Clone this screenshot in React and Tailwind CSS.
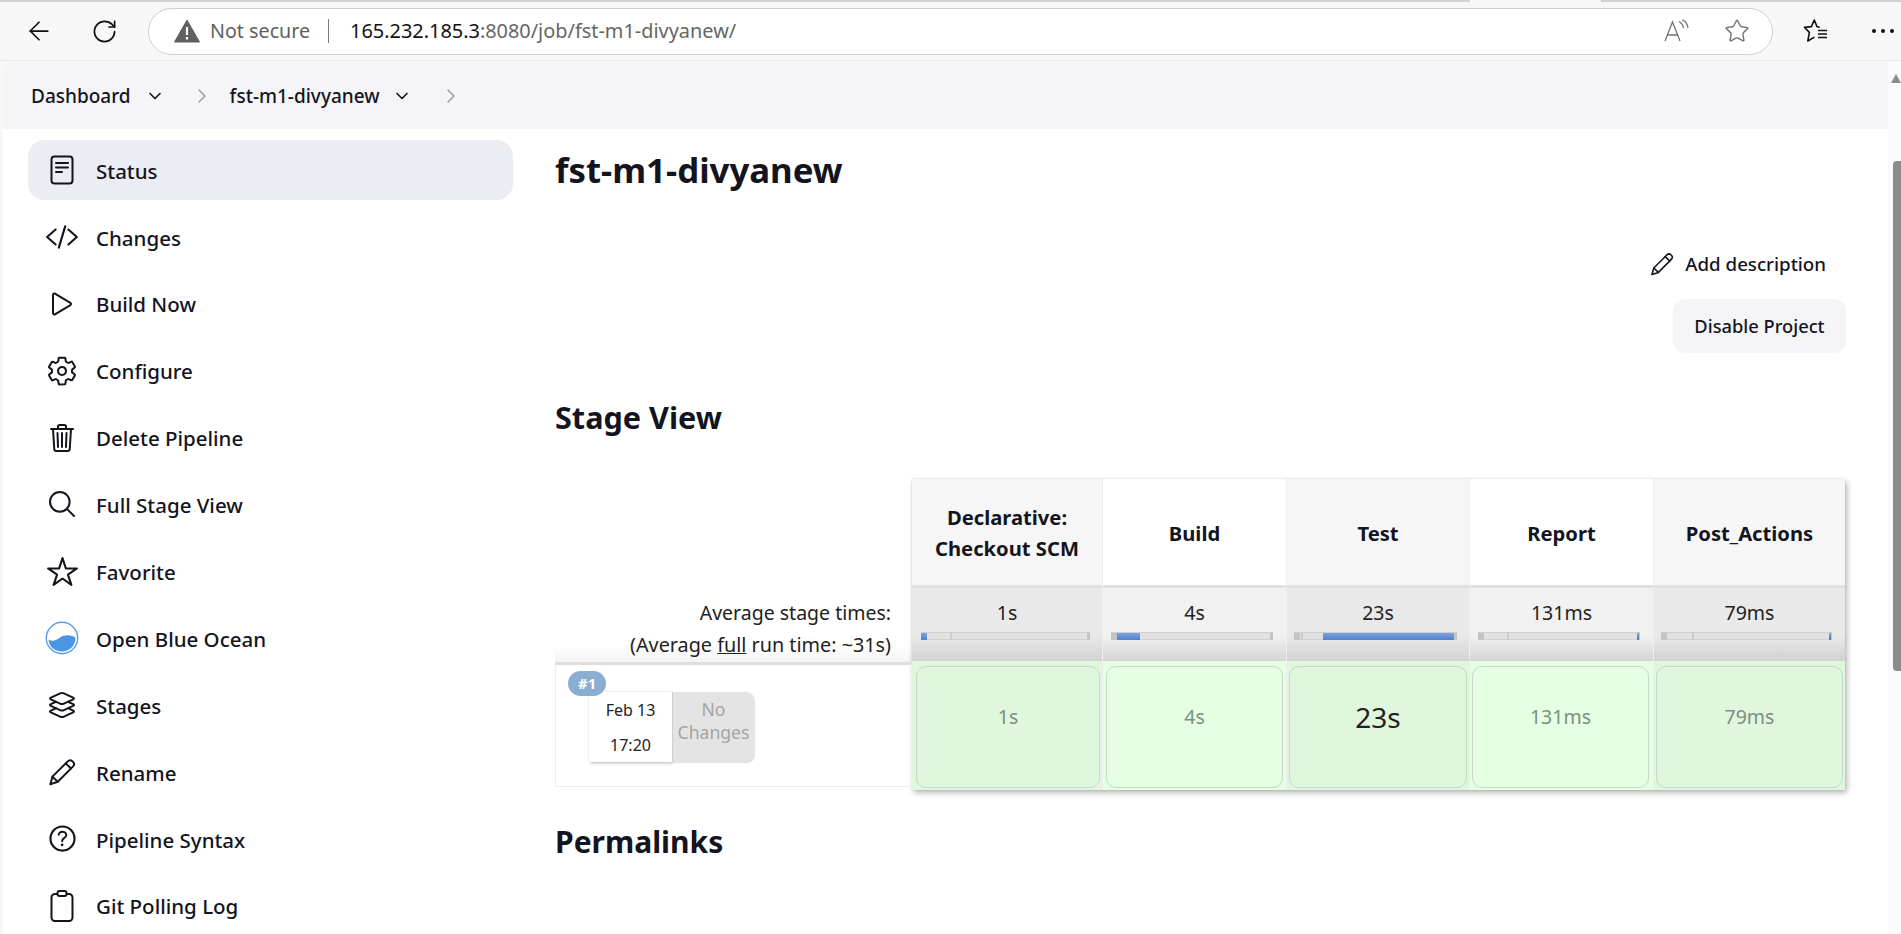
import { ArrowLeft, RotateCw, Star, ChevronDown, ChevronRight } from 'lucide-react';
import {
  IoCodeSlashOutline,
  IoPlayOutline,
  IoSettingsOutline,
  IoTrashOutline,
  IoSearchOutline,
  IoStarOutline,
  IoLayersOutline,
  IoHelpCircleOutline,
} from 'react-icons/io5';

const FONT = 'font-["Noto_Sans",sans-serif]';

function StatusIcon() {
  return (
    <svg width="30" height="30" viewBox="0 0 30 30" fill="none" stroke="currentColor" strokeWidth="2" strokeLinecap="round">
      <rect x="4.5" y="1.5" width="21" height="27" rx="3" />
      <path d="M9 8H21M9 12.5H21M9 17H15" />
    </svg>
  );
}

function OceanIcon() {
  return (
    <svg width="34" height="34" viewBox="0 0 34 34" fill="none">
      <circle cx="17" cy="17" r="15.7" stroke="#5b9de8" strokeWidth="1.4" />
      <path d="M3.5 18.5C8 21 11.5 19 15 16.5C19 13.5 25 13.5 30.5 16.5C30.5 25 24 30.5 17 30.5C9.5 30.5 4 25.5 3.5 18.5Z" fill="#4c94e4" />
    </svg>
  );
}

function ClipboardIcon() {
  return (
    <svg width="30" height="32" viewBox="0 0 30 32" fill="none" stroke="currentColor" strokeWidth="2" strokeLinejoin="round">
      <rect x="4.5" y="4" width="21" height="27" rx="3.5" />
      <rect x="10.5" y="1" width="9" height="5" rx="2" fill="white" />
    </svg>
  );
}

function PencilIcon({ size, strokeWidth = 1.7 }) {
  return (
    <svg width={size} height={size} viewBox="0 0 24 24" fill="none" stroke="currentColor" strokeWidth={strokeWidth} strokeLinejoin="round" strokeLinecap="round">
      <path d="M2 22.5L3.8 16L16.8 3C18 1.8 19.6 1.6 20.8 2.7L21.6 3.5C22.7 4.7 22.5 6.2 21.3 7.4L8.4 20.4Z" />
      <path d="M15.2 4.6L19.7 9M3.8 16L8.4 20.4" />
    </svg>
  );
}

const NAV_ITEMS = [
  { label: 'Status', icon: <StatusIcon />, active: true },
  { label: 'Changes', icon: <IoCodeSlashOutline size={34} /> },
  { label: 'Build Now', icon: <IoPlayOutline size={32} /> },
  { label: 'Configure', icon: <IoSettingsOutline size={32} /> },
  { label: 'Delete Pipeline', icon: <IoTrashOutline size={32} /> },
  { label: 'Full Stage View', icon: <IoSearchOutline size={32} /> },
  { label: 'Favorite', icon: <IoStarOutline size={33} /> },
  { label: 'Open Blue Ocean', icon: <OceanIcon /> },
  { label: 'Stages', icon: <IoLayersOutline size={32} /> },
  { label: 'Rename', icon: <PencilIcon size={28} /> },
  { label: 'Pipeline Syntax', icon: <IoHelpCircleOutline size={35} /> },
  { label: 'Git Polling Log', icon: <ClipboardIcon /> },
];

// trackLeft/track size the progress track in its column, fillLeft/fill the blue part, tick the darker mark
const STAGES = [
  { name: ['Declarative:', 'Checkout SCM'], avg: '1s', width: 'w-[191px]', cellPad: 'pl-[4px] pr-[2px]', trackLeft: 9, track: 169, fillLeft: 0, fill: 6, tick: 29 },
  { name: ['Build'], avg: '4s', width: 'w-[184px]', cellPad: 'pl-[3px] pr-[3px]', trackLeft: 8, track: 162, fillLeft: 6, fill: 23, tick: 6 },
  { name: ['Test'], avg: '23s', big: true, width: 'w-[183px]', cellPad: 'pl-[2px] pr-[2px]', trackLeft: 7, track: 163, fillLeft: 29, fill: 131, tick: 7 },
  { name: ['Report'], avg: '131ms', width: 'w-[184px]', cellPad: 'pl-[2px] pr-[4px]', trackLeft: 8, track: 162, fillLeft: 159, fill: 2, tick: 29 },
  { name: ['Post_Actions'], avg: '79ms', width: 'w-[191px]', cellPad: 'pl-[2px] pr-[2px]', trackLeft: 7, track: 171, fillLeft: 168, fill: 2, tick: 31 },
];

function ReadAloudIcon() {
  return (
    <svg width="26" height="24" viewBox="0 0 26 24" fill="none" stroke="#707070" strokeWidth="1.3">
      <path d="M1 22L8.5 3L16 22M3.6 16H13.4" />
      <path d="M15 2.5C17.5 4 19 6 19.5 9M18.5 0.8C22 2.6 23.6 5.4 24 9" />
    </svg>
  );
}

function FavoritesIcon() {
  return (
    <svg width="26" height="26" viewBox="0 0 26 26" fill="none" stroke="#111" strokeWidth="1.6" strokeLinejoin="round" strokeLinecap="round">
      <path d="M16 9.2L14 8.6L11.3 2L8.4 8.6L1.5 9.4L6.4 14.4L4.8 23L11 19.4" />
      <path d="M15 12.5H24M15 16H24M15 19.5H24" strokeWidth="1.4" strokeLinecap="butt" />
    </svg>
  );
}

function Toolbar() {
  return (
    <div className="relative flex h-[61px] shrink-0 items-center border-t-2 border-b border-t-[#d2d2d2] border-b-[#e9e9e9] bg-[#f7f7f7]">
      <div className="absolute left-[1470px] top-[-2px] h-[2px] w-[131px] bg-[#f7f7f7]" />
      <ArrowLeft size={30} strokeWidth={1.4} className="ml-[24px] text-[#111]" />
      <RotateCw size={27} strokeWidth={1.5} className="ml-[37px] text-[#111]" />
      <div className="ml-[30px] flex h-[47px] w-[1625px] items-center rounded-full border border-[#cfcfcf] bg-white">
        <svg className="ml-[25px]" width="26" height="24" viewBox="0 0 26 24">
          <path d="M13 1L25.5 23H0.5Z" fill="#606060" stroke="#606060" strokeLinejoin="round" />
          <path d="M13 8V16M13 18V20.5" stroke="white" strokeWidth="2.2" />
        </svg>
        <span className="ml-[10px] text-[19.7px] text-[#5f5f5f]">Not secure</span>
        <span className="ml-[18px] h-[24px] w-[1px] bg-[#7d7d7d]" />
        <span className="ml-[21px] text-[19.9px] text-[#111]">
          165.232.185.3<span className="text-[#666]">:8080/job/fst-m1-divyanew/</span>
        </span>
        <span className="ml-auto">
          <ReadAloudIcon />
        </span>
        <Star size={26} strokeWidth={1.3} className="ml-[34px] mr-[22px] text-[#707070]" />
      </div>
      <span className="ml-[30px]">
        <FavoritesIcon />
      </span>
      <div className="ml-[43px] flex gap-[5px]">
        <span className="h-[4px] w-[4px] rounded-full bg-[#111]" />
        <span className="h-[4px] w-[4px] rounded-full bg-[#111]" />
        <span className="h-[4px] w-[4px] rounded-full bg-[#111]" />
      </div>
    </div>
  );
}

function Breadcrumbs() {
  return (
    <div className="flex h-[68px] shrink-0 items-center rounded-tl-xl bg-[#f5f5f7] pl-[28px] pt-[2px] text-[19px] font-medium text-[#14141f]">
      <span>Dashboard</span>
      <ChevronDown size={20} strokeWidth={2} className="ml-[14px]" />
      <ChevronRight size={24} strokeWidth={1.5} className="ml-[25px] text-[#9c9ca5]" />
      <span className="ml-[16px]">fst-m1-divyanew</span>
      <ChevronDown size={20} strokeWidth={2} className="ml-[12px]" />
      <ChevronRight size={24} strokeWidth={1.5} className="ml-[27px] text-[#9c9ca5]" />
    </div>
  );
}

function Sidebar() {
  return (
    <nav className="w-[552px] shrink-0 pl-[25px] pr-[42px] pt-[11px]">
      {NAV_ITEMS.map((item) => (
        <div
          key={item.label}
          className={`mb-[6.9px] flex h-[60px] items-center rounded-2xl text-[20.5px] font-medium text-[#14141f] ${item.active ? 'bg-[#ecedf2]' : ''}`}
        >
          <span className="flex w-[68px] justify-center">{item.icon}</span>
          <span className="pt-[2px]">{item.label}</span>
        </div>
      ))}
    </nav>
  );
}

function ProgressBar({ stage }) {
  return (
    <div
      className="relative h-[8px] border-t border-[#cfcfcf] bg-[#e2e2e2] shadow-[inset_0_-1px_1px_rgba(0,0,0,0.08)]"
      style={{ width: stage.track, marginLeft: stage.trackLeft }}
    >
      <div className="absolute inset-y-0 left-0 w-[6px] bg-[#c4c4c4]" />
      <div className="absolute inset-y-0 w-[2px] bg-[#cccccc]" style={{ left: stage.tick }} />
      <div className="absolute inset-y-0 right-0 w-[3px] bg-[#c4c4c4]" />
      <div
        className="absolute inset-y-0 bg-gradient-to-b from-[#7ea3db] to-[#4f7fd0]"
        style={{ left: stage.fillLeft, width: stage.fill }}
      />
    </div>
  );
}

function StageColumn({ stage, index }) {
  const odd = index % 2 === 0;
  const isLast = index === STAGES.length - 1;
  return (
    <div className={`${stage.width} shrink-0 ${isLast ? '' : 'border-r border-[#eeeeee]'}`}>
      <div className={`flex h-[106px] flex-col items-center justify-center pt-[2px] text-[20.2px] font-bold leading-[31px] text-[#14141f] ${odd ? 'bg-[#f6f6f6]' : 'bg-white'}`}>
        {stage.name.map((line) => (
          <span key={line}>{line}</span>
        ))}
      </div>
      <div className={`h-[76px] border-t-[3px] border-[#e0e0e0] ${odd ? 'bg-gradient-to-b from-[#e9e9e9] from-[65%] to-[#d2d2d2]' : 'bg-gradient-to-b from-[#f1f1f1] from-[65%] to-[#d4d4d4]'}`}>
        <div className="pt-[9px] text-center text-[19.5px] leading-[32px] text-[#222]">{stage.avg}</div>
        <div className="pt-[3px]">
          <ProgressBar stage={stage} />
        </div>
      </div>
      <div className={`h-[129px] pb-[2px] pt-[5px] ${stage.cellPad} ${odd ? 'bg-[#dff7dd]' : 'bg-[#e5ffe3]'}`}>
        <div className={`flex h-full items-start justify-center rounded-[10px] border-[1.5px] border-[#c9d6c9] pt-[30px] leading-[40px] ${stage.big ? 'text-[28px] text-[#222]' : 'text-[19.5px] text-[#7f8f7f]'}`}>
          {stage.avg}
        </div>
      </div>
    </div>
  );
}

function StageView() {
  return (
    <div className="mt-[42px] flex">
      <div className="w-[357px] shrink-0 pt-[106px]">
        <div className="h-[77px] bg-gradient-to-b from-white from-[80%] to-[#f3f3f3] pr-[21px] pt-[12px] text-right leading-[32px] text-[#222]">
          <div className="text-[19.5px]">Average stage times:</div>
          <div className="text-[19.8px]">
            (Average <span className="underline">full</span> run time: ~31s)
          </div>
        </div>
        <div className="relative h-[125px] border-x border-b border-t-[3px] border-x-[#eeeeee] border-b-[#eeeeee] border-t-[#dedede]">
          <div className="absolute left-[12px] top-[6px] z-10 rounded-full bg-[#8aaed2] px-[10px] text-[15px] font-bold leading-[25px] text-white">#1</div>
          <div className="ml-[33px] mt-[27px] flex w-[165px]">
            <div className="h-[70px] w-[83px] bg-white pt-[1px] text-center text-[16px] leading-[35px] text-[#222] shadow-[1px_1px_3px_rgba(0,0,0,0.3)]">
              <div>Feb 13</div>
              <div>17:20</div>
            </div>
            <div className="flex h-[70px] w-[82px] items-center justify-center rounded-r-lg border-l border-[#cfcfcf] bg-[#e4e4e4] pb-[12px] text-center text-[17.6px] leading-[23px] text-[#a4a4a4] shadow-[1px_1px_1px_rgba(0,0,0,0.12)]">
              No Changes
            </div>
          </div>
        </div>
      </div>
      <div className="flex shadow-[2px_3px_6px_rgba(0,0,0,0.28),0_0_2px_rgba(0,0,0,0.12)]">
        {STAGES.map((stage, index) => (
          <StageColumn key={stage.avg} stage={stage} index={index} />
        ))}
      </div>
    </div>
  );
}

function Main() {
  return (
    <main className="min-w-0 flex-1 pr-[42px] text-[#14141f]">
      <h1 className="pt-[18px] text-[34.8px] font-bold leading-[46px]">fst-m1-divyanew</h1>
      <div className="mt-[56px] flex items-center justify-end pr-[20px] text-[18.7px] font-medium leading-[30px]">
        <PencilIcon size={24} strokeWidth={1.6} />
        <span className="ml-[11px]">Add description</span>
      </div>
      <div className="mt-[20px] flex justify-end">
        <div className="flex h-[54px] w-[173px] items-center justify-center rounded-xl bg-[#f5f5f7] text-[18.3px] font-medium">Disable Project</div>
      </div>
      <h2 className="mt-[44px] text-[30.6px] font-bold leading-[40px]">Stage View</h2>
      <StageView />
      <h2 className="mt-[32px] text-[30px] font-bold leading-[40px]">Permalinks</h2>
    </main>
  );
}

function Scrollbar() {
  return (
    <div className="relative w-[13px] shrink-0 bg-[#fafafa]">
      <div className="absolute right-0 top-[13px] h-0 w-0 border-x-[5px] border-b-[9px] border-x-transparent border-b-[#8c8c8c]" />
      <div className="absolute bottom-[263px] right-0 top-[100px] w-[8px] rounded-l-[4px] bg-[#8c8c8c]" />
    </div>
  );
}

export default function App() {
  return (
    <div className={`flex h-screen flex-col overflow-hidden bg-[#f7f7f7] ${FONT}`}>
      <Toolbar />
      <div className="flex min-h-0 flex-1 pl-[3px]">
        <div className="flex min-w-0 flex-1 flex-col overflow-hidden rounded-tl-xl bg-white">
          <Breadcrumbs />
          <div className="flex min-h-0 flex-1">
            <Sidebar />
            <Main />
          </div>
        </div>
        <Scrollbar />
      </div>
    </div>
  );
}
